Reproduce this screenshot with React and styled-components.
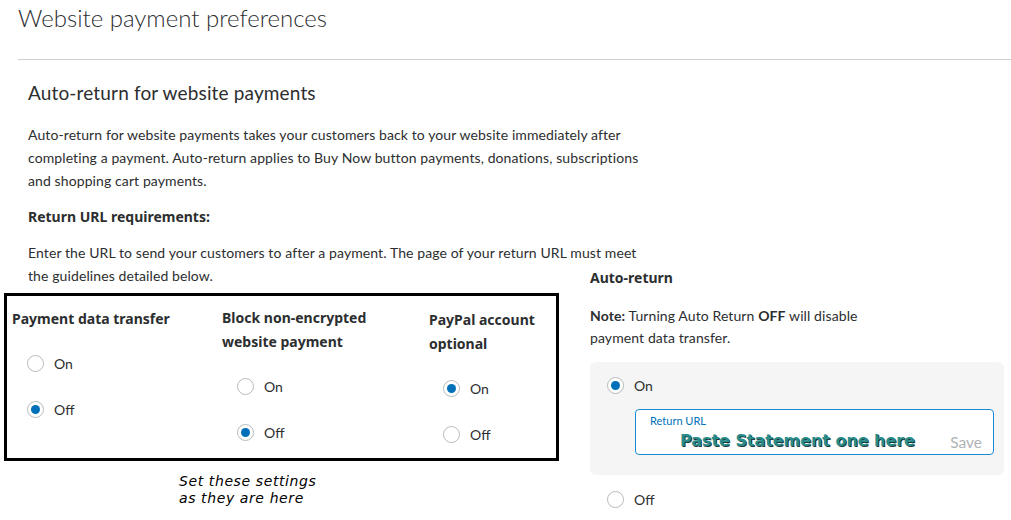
import styled, { createGlobalStyle } from "styled-components";

const GlobalStyle = createGlobalStyle`
  body {
    margin: 0;
    background: #fff;
    font-family: Lato, "Noto Sans", sans-serif;
    color: #2c2e2f;
  }
`;

const Page = styled.div`
  padding-left: 18px;
  width: 993px;
`;

const Title = styled.h1`
  margin: 0;
  font-size: 24px;
  font-weight: 300;
  line-height: 36px;
  color: #2c2e2f;
`;

const Divider = styled.hr`
  margin: 23px 0 0;
  border: none;
  border-top: 1px solid #cbd2d6;
`;

const Section = styled.section`
  padding-left: 10px;
`;

const SectionTitle = styled.h2`
  margin: 19px 0 16px;
  font-size: 19px;
  font-weight: 400;
  line-height: 28px;
  letter-spacing: 0.15px;
`;

const Paragraph = styled.p`
  margin: 0 0 13px;
  width: ${(p) => p.width || 625}px;
  font-size: 14px;
  letter-spacing: 0.1px;
  line-height: ${(p) => p.lh || 23}px;
`;

const Strong = styled.strong`
  font-weight: 700;
`;

const HeavyLabel = styled.div`
  font-family: "Noto Sans", Lato, sans-serif;
  font-size: 14px;
  font-weight: 700;
  line-height: 24px;
  color: #2c2e2f;
`;

const SubHeading = styled(HeavyLabel)`
  margin: 0 0 13px;
  line-height: 23px;
`;

const Columns = styled.div`
  display: grid;
  grid-template-columns: 562px 414px;
  align-items: start;
`;

const LeftCol = styled.div`
  display: flex;
  flex-direction: column;
`;

const SettingsBox = styled.div`
  margin: -7px 0 0 -24px;
  width: 544px;
  border: 3px solid #000;
  padding: 10px 0 14px 5px;
  display: grid;
  grid-template-columns: 210px 207px 1fr;
`;

const Setting = styled.div`
  display: flex;
  flex-direction: column;
  padding-top: ${(p) => p.offset || 0}px;
`;

const SettingTitle = styled(HeavyLabel)`
  max-width: 190px;
  margin-bottom: 22px;
`;

const RadioList = styled.div`
  display: flex;
  flex-direction: column;
  gap: 26px;
  padding-left: ${(p) => p.indent || 15}px;
`;

const RadioRow = styled.label`
  display: flex;
  align-items: center;
  gap: 10px;
  height: 20px;
  font-size: 14px;
`;

const RadioCircle = styled.span`
  box-sizing: border-box;
  width: 17px;
  height: 17px;
  border-radius: 50%;
  border: 1px solid #b6babd;
  background: #fff;
  display: flex;
  align-items: center;
  justify-content: center;
  flex-shrink: 0;

  &::after {
    content: "";
    width: 9px;
    height: 9px;
    border-radius: 50%;
    background: ${(p) => (p.checked ? "#0070ba" : "transparent")};
  }
`;

const Caption = styled.div`
  margin: 12px 0 0 151px;
  font-family: "DejaVu Sans", Verdana, sans-serif;
  font-style: italic;
  font-size: 14px;
  letter-spacing: 0.6px;
  line-height: 17px;
  color: #000;
`;

const RightCol = styled.div`
  margin-top: 25px;
  display: flex;
  flex-direction: column;
`;

const PanelTitle = styled(HeavyLabel)`
  line-height: 23px;
  margin-bottom: 16px;
`;

const OptionPanel = styled.div`
  background: #f5f5f5;
  border-radius: 6px;
  padding: 13px 10px 20px 17px;
  display: flex;
  flex-direction: column;
  gap: 14px;
`;

const UrlField = styled.div`
  margin-left: 28px;
  height: 46px;
  box-sizing: border-box;
  border: 1px solid #1a8ad4;
  border-radius: 4px;
  background: #fff;
  padding: 3px 11px 0 14px;
  display: flex;
  flex-direction: column;
`;

const FieldLabel = styled.span`
  font-size: 11px;
  line-height: 15px;
  color: #0070ba;
`;

const FieldRow = styled.div`
  display: flex;
  align-items: center;
  justify-content: space-between;
  padding: 2px 0 0 30px;
`;

const PastedText = styled.span`
  font-family: "DejaVu Sans", Verdana, sans-serif;
  font-weight: 700;
  font-size: 16px;
  line-height: 20px;
  letter-spacing: -0.05px;
  color: #2a8c8a;
  text-shadow: 1px 1px 0 #1d3b3b;
`;

const SaveButton = styled.span`
  font-size: 15.5px;
  line-height: 20px;
  margin-top: 2px;
  color: #b0b3b5;
`;

const OffRow = styled.div`
  margin: 14px 0 0 17px;
`;

function Radio({ checked, children }) {
  return (
    <RadioRow>
      <RadioCircle checked={checked} />
      {children}
    </RadioRow>
  );
}

const settings = [
  { title: "Payment data transfer", value: "off", offset: 1 },
  { title: "Block non-encrypted website payment", value: "off", offset: 0 },
  { title: "PayPal account optional", value: "on", offset: 2, indent: 14 },
];

export default function App() {
  return (
    <>
      <GlobalStyle />
      <Page>
        <Title>Website payment preferences</Title>
        <Divider />
        <Section>
          <SectionTitle>Auto-return for website payments</SectionTitle>
          <Paragraph>
            Auto-return for website payments takes your customers back to your
            website immediately after completing a payment. Auto-return applies
            to Buy Now button payments, donations, subscriptions and shopping
            cart payments.
          </Paragraph>
          <SubHeading>Return URL requirements:</SubHeading>
          <Columns>
            <LeftCol>
              <Paragraph>
                Enter the URL to send your customers to after a payment. The
                page of your return URL must meet the guidelines detailed below.
              </Paragraph>
              <SettingsBox>
                {settings.map((s) => (
                  <Setting key={s.title} offset={s.offset}>
                    <SettingTitle>{s.title}</SettingTitle>
                    <RadioList indent={s.indent}>
                      <Radio checked={s.value === "on"}>On</Radio>
                      <Radio checked={s.value === "off"}>Off</Radio>
                    </RadioList>
                  </Setting>
                ))}
              </SettingsBox>
              <Caption>
                Set these settings
                <br />
                as they are here
              </Caption>
            </LeftCol>
            <RightCol>
              <PanelTitle>Auto-return</PanelTitle>
              <Paragraph width={290} lh={22}>
                <Strong>Note:</Strong> Turning Auto Return <Strong>OFF</Strong>{" "}
                will disable payment data transfer.
              </Paragraph>
              <OptionPanel>
                <Radio checked>On</Radio>
                <UrlField>
                  <FieldLabel>Return URL</FieldLabel>
                  <FieldRow>
                    <PastedText>Paste Statement one here</PastedText>
                    <SaveButton>Save</SaveButton>
                  </FieldRow>
                </UrlField>
              </OptionPanel>
              <OffRow>
                <Radio>Off</Radio>
              </OffRow>
            </RightCol>
          </Columns>
        </Section>
      </Page>
    </>
  );
}
